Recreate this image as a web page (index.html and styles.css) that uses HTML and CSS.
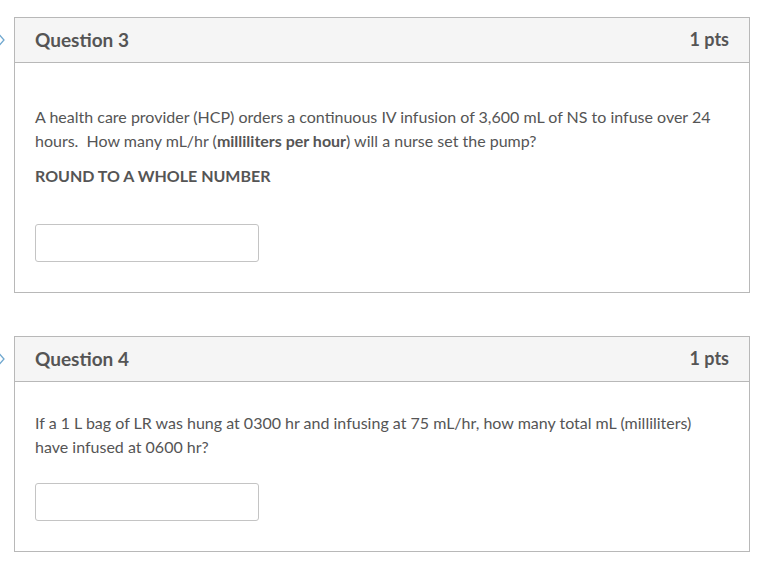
FILE: index.html
```html
<!DOCTYPE html>
<html lang="en">
  <head>
    <title>Quiz</title>
    <meta charset="utf-8" />
    <meta name="viewport" content="width=device-width, initial-scale=1" />
    <link rel="stylesheet" href="styles.css">
  </head>

  <body>
    <div class="question">
      <svg class="marker" width="10" height="18" viewBox="0 0 10 18">
        <path d="M1 1 L8 9 L1 17" fill="none" stroke="#6fa7cf" stroke-width="1.3" />
      </svg>
      <div class="header">
        <span class="name">Question 3</span>
        <span class="points">1 pts</span>
      </div>
      <div class="content content-wide">
        <p>
          A health care provider (HCP) orders a continuous IV infusion of 3,600 mL of NS to infuse over 24
          hours.&nbsp; How many mL/hr (<strong>milliliters per hour</strong>) will a nurse set the pump?
        </p>
        <p><strong>ROUND TO A WHOLE NUMBER</strong></p>
        <input type="text" class="answer" />
      </div>
    </div>

    <div class="question">
      <svg class="marker" width="10" height="18" viewBox="0 0 10 18">
        <path d="M1 1 L8 9 L1 17" fill="none" stroke="#6fa7cf" stroke-width="1.3" />
      </svg>
      <div class="header">
        <span class="name">Question 4</span>
        <span class="points">1 pts</span>
      </div>
      <div class="content">
        <p>
          If a 1 L bag of LR was hung at 0300 hr and infusing at 75 mL/hr, how many total mL (milliliters)
          have infused at 0600 hr?
        </p>
        <input type="text" class="answer" />
      </div>
    </div>
  </body>
</html>
```

FILE: styles.css
```css
body {
  margin: 0;
  padding: 17px 17px 0 14px;
  font-family: Lato, "Open Sans", sans-serif;
  color: #555;
  background: #fff;
}

.question {
  position: relative;
  border: 1px solid #b8b8b8;
  margin-bottom: 43px;
}

.question:last-child {
  margin-bottom: 0;
}

.marker {
  position: absolute;
  left: -19px;
  top: 13px;
}

.header {
  display: flex;
  justify-content: space-between;
  align-items: center;
  height: 44px;
  padding: 0 20px;
  background: #f5f5f5;
  border-bottom: 1px solid #b8b8b8;
}

.name {
  font-size: 19px;
  font-weight: bold;
  margin-top: -2px;
}

.points {
  font-size: 18px;
  font-weight: bold;
  margin-top: -2px;
}

.content {
  padding: 29px 34px 30px 20px;
}

.content-wide {
  padding-top: 42px;
}

.content p {
  margin: 0 0 11px;
  font-size: 16px;
  line-height: 24px;
}

.content p:last-of-type {
  margin-bottom: 24px;
}

.content-wide p:last-of-type {
  margin-bottom: 36px;
}

.answer {
  display: block;
  width: 224px;
  height: 38px;
  box-sizing: border-box;
  border: 1px solid #c4c4c4;
  border-radius: 3px;
  margin: 0;
}
```
